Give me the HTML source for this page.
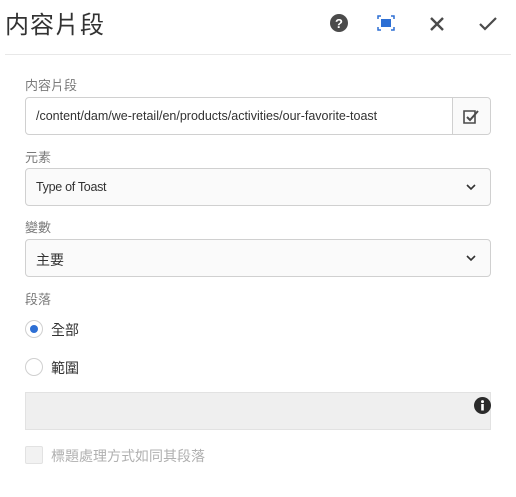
<!DOCTYPE html>
<html><head><meta charset="utf-8"><style>
*{box-sizing:border-box;margin:0;padding:0}
body{width:516px;height:497px;background:#fff;font-family:"Liberation Sans","Noto Sans CJK TC",sans-serif;position:relative;overflow:hidden;color:#323232}
.a{position:absolute}
.lbl{font-size:13px;color:#7a7a7a;left:25px}
.box{left:25px;width:466px;height:38px;border:1px solid #d0d0d0;border-radius:4px;background:#fafafa}
.txt{font-size:12.5px;color:#323232;position:absolute;left:10px;top:11px}
.chev{position:absolute;right:14px;top:14px}
</style></head><body>
<div class="a" style="left:5px;top:5px;font-size:24px;color:#323232;letter-spacing:1px">内容片段</div>
<svg class="a" style="left:330px;top:14px" width="18" height="18" viewBox="0 0 18 18"><circle cx="9" cy="9" r="9" fill="#4b4b4b"/><text x="9" y="14" font-size="13" font-weight="bold" text-anchor="middle" fill="#fff" font-family="Liberation Sans">?</text></svg>
<svg class="a" style="left:377px;top:15px" width="18" height="16" viewBox="0 0 18 16"><path d="M1 4V1h3M14 1h3v3M17 12v3h-3M4 15H1v-3" stroke="#2d6fd4" stroke-width="1.5" fill="none"/><rect x="4" y="4" width="10" height="8" fill="#2d6fd4"/></svg>
<svg class="a" style="left:429px;top:16px" width="16" height="16" viewBox="0 0 16 16"><path d="M2 2L14 14M14 2L2 14" stroke="#4b4b4b" stroke-width="2.4"/></svg>
<svg class="a" style="left:479px;top:17px" width="18" height="14" viewBox="0 0 18 14"><path d="M1 7l5 5L17 1" stroke="#4b4b4b" stroke-width="2.2" fill="none"/></svg>
<div class="a" style="left:5px;top:54px;width:506px;height:1px;background:#e8e8e8"></div>

<div class="a lbl" style="top:75px">内容片段</div>
<div class="a box" style="top:97px;background:#fff"><div class="txt">/content/dam/we-retail/en/products/activities/our-favorite-toast</div>
<div style="position:absolute;right:0;top:0;width:38px;height:36px;border-left:1px solid #d0d0d0;background:#fafafa;border-radius:0 4px 4px 0"><svg style="position:absolute;left:10px;top:11px" width="16" height="15" viewBox="0 0 16 15"><path d="M1 2h11v12H1z" stroke="#4b4b4b" stroke-width="1.6" fill="none"/><path d="M4 8l3 3 8-9" stroke="#4b4b4b" stroke-width="2" fill="none"/></svg></div></div>

<div class="a lbl" style="top:147px">元素</div>
<div class="a box" style="top:168px"><div class="txt" style="letter-spacing:-0.3px">Type of Toast</div><svg class="chev" width="10" height="8" viewBox="0 0 10 8"><path d="M1 2l4 4 4-4" stroke="#323232" stroke-width="1.6" fill="none"/></svg></div>

<div class="a lbl" style="top:217px">變數</div>
<div class="a box" style="top:239px"><div class="txt" style="font-size:14px;top:10px">主要</div><svg class="chev" width="10" height="8" viewBox="0 0 10 8"><path d="M1 2l4 4 4-4" stroke="#323232" stroke-width="1.6" fill="none"/></svg></div>

<div class="a lbl" style="top:289px">段落</div>
<div class="a" style="left:25px;top:320px;width:18px;height:18px;border-radius:50%;border:1px solid #d0d0d0;background:#fff"><div style="position:absolute;left:4px;top:4px;width:8px;height:8px;border-radius:50%;background:#2d6fd4"></div></div>
<div class="a" style="left:51px;top:320px;font-size:14px">全部</div>
<div class="a" style="left:25px;top:358px;width:18px;height:18px;border-radius:50%;border:1px solid #d0d0d0;background:#fff"></div>
<div class="a" style="left:51px;top:358px;font-size:14px">範圍</div>

<div class="a" style="left:25px;top:392px;width:466px;height:38px;border:1px solid #e2e2e2;background:#efefef"></div>
<svg class="a" style="left:474px;top:397px" width="17" height="17" viewBox="0 0 17 17"><circle cx="8.5" cy="8.5" r="8.5" fill="#2b2b2b"/><rect x="7.2" y="7" width="2.6" height="6.5" fill="#fff"/><circle cx="8.5" cy="4.6" r="1.5" fill="#fff"/></svg>

<div class="a" style="left:25px;top:446px;width:18px;height:18px;border:1px solid #e2e2e2;background:#f2f2f2;border-radius:2px"></div>
<div class="a" style="left:51px;top:446px;font-size:14px;color:#b0b0b0">標題處理方式如同其段落</div>
</body></html>
